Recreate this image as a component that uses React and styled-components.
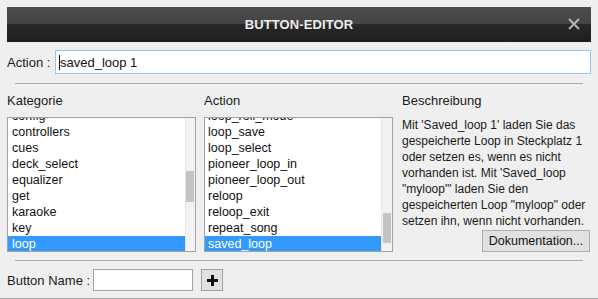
import styled, { createGlobalStyle } from "styled-components";

const GlobalStyle = createGlobalStyle`
    html, body {
        margin: 0;
        padding: 0;
        background: #efefef;
    }
    * {
        box-sizing: border-box;
    }
`

const Window = styled.div`
    width: 598px;
    height: 299px;
    padding: 7px 7px 0;
    background: #efefef;
    border-bottom: 1px solid #a9a9a9;
    font-family: 'Liberation Sans', Arial, sans-serif;
    font-size: 13px;
    color: #1a1a1a;
    display: flex;
    flex-direction: column;
    & > * {
        flex-shrink: 0;
    }
`

const TitleBar = styled.div`
    height: 35px;
    position: relative;
    display: flex;
    align-items: center;
    justify-content: center;
    background: linear-gradient(#4b4b4b 0%, #444 48%, #282828 49%, #1e1e1e 100%);
    color: #ececec;
    font-weight: 700;
    font-size: 13px;
    letter-spacing: 0.1px;
`

const CloseButton = styled.div`
    position: absolute;
    right: 11px;
    top: 11px;
    width: 12px;
    height: 12px;
    display: flex;
`

const Row = styled.div`
    display: flex;
    align-items: center;
    margin-top: ${p => p.$top}px;
`

const Label = styled.div`
    width: ${p => p.$width}px;
    flex-shrink: 0;
    white-space: nowrap;
`

const ActionInput = styled.div`
    flex: 1;
    height: 24px;
    border: 1px solid #92c9f7;
    background: #fff;
    padding: 0 3px;
    display: flex;
    align-items: center;
    font-size: 13px;
    color: #111;
`

const Caret = styled.span`
    width: 1px;
    height: 15px;
    background: #111;
`

const Separator = styled.div`
    height: 1px;
    background: #a9a9a9;
    margin: ${p => p.$top}px 8px 0;
`

const Columns = styled.div`
    display: grid;
    grid-template-columns: 189px 189px 189px;
    grid-template-rows: 159px;
    column-gap: 8px;
    margin-top: 9px;
    & > :last-child {
        margin-left: 1px;
    }
`

const Column = styled.div`
    display: flex;
    flex-direction: column;
    min-height: 0;
`

const ColumnTitle = styled.div`
    height: 16px;
    line-height: 16px;
    margin-bottom: 8px;
    flex-shrink: 0;
`

const ListBox = styled.div`
    height: 135px;
    flex-shrink: 0;
    border: 1px solid #a2a2a2;
    background: #fff;
    display: flex;
    overflow: hidden;
    font-size: 12.5px;
`

const Items = styled.div`
    flex: 1;
    margin-top: -10px;
`

const Item = styled.div`
    height: 16px;
    line-height: 16px;
    padding-left: ${p => p.$pad}px;
    white-space: nowrap;
    background: ${p => (p.$selected ? "#3399ff" : "transparent")};
    color: ${p => (p.$selected ? "#fff" : "#111")};
`

const ScrollTrack = styled.div`
    width: ${p => p.$width}px;
    flex-shrink: 0;
    background: #f2f2f2;
    border-left: 1px solid #e6e6e6;
    display: flex;
    flex-direction: column;
    align-items: ${p => (p.$alignEnd ? "flex-end" : "flex-start")};
    padding-right: 1px;
`

const ScrollThumb = styled.div`
    width: 8px;
    height: ${p => p.$height}px;
    margin-top: ${p => p.$offset}px;
    background: #c3c3c8;
`

const Description = styled.div`
    flex: 1;
    min-height: 0;
    overflow: hidden;
    font-size: 12px;
    line-height: 16px;
    color: #1a1a1a;
`

const DocButton = styled.button`
    align-self: flex-end;
    flex-shrink: 0;
    width: 108px;
    height: 22px;
    border: 1px solid #adadad;
    background: #e1e1e1;
    font-family: 'Liberation Sans', Arial, sans-serif;
    font-size: 12.5px;
    color: #111;
    padding: 0;
`

const NameInput = styled.div`
    width: 100px;
    height: 22px;
    border: 1px solid #a2a2a2;
    background: #fff;
`

const PlusButton = styled.div`
    width: 22px;
    height: 22px;
    margin-left: 8px;
    border: 1px solid #a2a2a2;
    background: #e1e1e1;
    display: flex;
    align-items: center;
    justify-content: center;
`

const categories = ["config", "controllers", "cues", "deck_select", "equalizer", "get", "karaoke", "key", "loop"]
const actions = ["loop_roll_mode", "loop_save", "loop_select", "pioneer_loop_in", "pioneer_loop_out", "reloop", "reloop_exit", "repeat_song", "saved_loop"]

const App = () => {
    return (
        <>
            <GlobalStyle />
            <Window>
                <TitleBar>
                    BUTTON-EDITOR
                    <CloseButton>
                        <svg width="12" height="12" viewBox="0 0 12 12">
                            <path d="M1 1 L11 11 M11 1 L1 11" stroke="#b4b4b4" strokeWidth="2" />
                        </svg>
                    </CloseButton>
                </TitleBar>

                <Row $top={8}>
                    <Label $width={48}>Action :</Label>
                    <ActionInput>
                        <Caret />
                        saved_loop 1
                    </ActionInput>
                </Row>

                <Separator $top={9} />

                <Columns>
                    <Column>
                        <ColumnTitle>Kategorie</ColumnTitle>
                        <ListBox>
                            <Items>
                                {categories.map(c => (
                                    <Item key={c} $pad={4} $selected={c === "loop"}>{c}</Item>
                                ))}
                            </Items>
                            <ScrollTrack $width={10}>
                                <ScrollThumb $height={31} $offset={53} />
                            </ScrollTrack>
                        </ListBox>
                    </Column>
                    <Column>
                        <ColumnTitle>Action</ColumnTitle>
                        <ListBox>
                            <Items>
                                {actions.map(a => (
                                    <Item key={a} $pad={3} $selected={a === "saved_loop"}>{a}</Item>
                                ))}
                            </Items>
                            <ScrollTrack $width={11} $alignEnd>
                                <ScrollThumb $height={30} $offset={95} />
                            </ScrollTrack>
                        </ListBox>
                    </Column>
                    <Column>
                        <ColumnTitle>Beschreibung</ColumnTitle>
                        <Description>
                            Mit 'Saved_loop 1' laden Sie das gespeicherte Loop in Steckplatz 1 oder setzen es, wenn es nicht vorhanden ist. Mit 'Saved_loop "myloop"' laden Sie den gespeicherten Loop "myloop" oder setzen ihn, wenn nicht vorhanden.
                        </Description>
                        <DocButton>Dokumentation...</DocButton>
                    </Column>
                </Columns>

                <Separator $top={8} />

                <Row $top={8}>
                    <Label $width={86}>Button Name :</Label>
                    <NameInput />
                    <PlusButton>
                        <svg width="11" height="11" viewBox="0 0 11 11">
                            <path d="M4 0 H7 V4 H11 V7 H7 V11 H4 V7 H0 V4 H4 Z" fill="#111" />
                        </svg>
                    </PlusButton>
                </Row>
            </Window>
        </>
    )
}

export default App;
